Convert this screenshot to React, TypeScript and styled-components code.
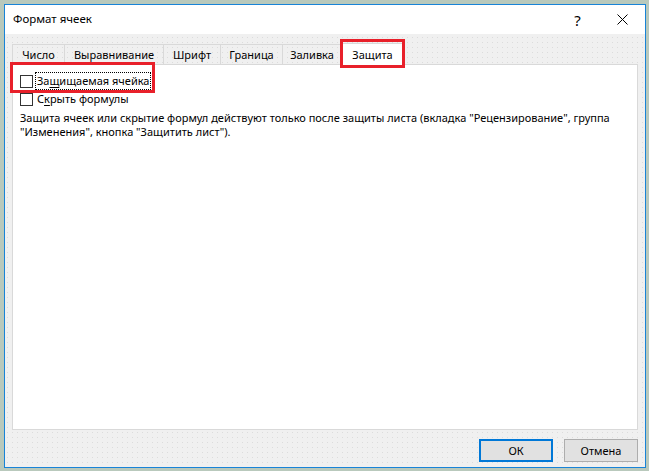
import styled, {createGlobalStyle} from 'styled-components';

const GlobalStyle = createGlobalStyle`
	html, body {
		margin: 0;
		padding: 0;
	}
	body {
		width: 649px;
		height: 471px;
		overflow: hidden;
		background: #b9c9bc;
		font-family: 'Noto Sans', sans-serif;
		font-size: 11px;
		color: #000;
	}
`;

const Window = styled.div`
	position: relative;
	margin: 4px 0 0 4px;
	width: 642px;
	height: 464px;
	box-sizing: border-box;
	border: 1px solid #1883d7;
	display: flex;
	flex-direction: column;
	background-color: #f0f0f0;
	background-image: radial-gradient(#dcdcdc 0.6px, transparent 0.8px);
	background-size: 5px 5px;
`;

const TitleBar = styled.div`
	height: 29px;
	flex: none;
	background: #fff;
	display: flex;
	align-items: center;
	padding-left: 8px;
`;

const Title = styled.span`
	flex: 1;
	font-size: 11.5px;
	margin-top: -2px;
`;

const TitleButton = styled.div`
	width: 45px;
	height: 29px;
	display: flex;
	align-items: center;
	justify-content: center;
	font-size: 15px;
`;

const Body = styled.div`
	flex: 1;
	display: flex;
	flex-direction: column;
	padding: 10px 7px 6px 7px;
`;

const TabStrip = styled.div`
	display: flex;
	height: 20px;
	align-items: flex-end;
`;

const Tab = styled.div<{$active?: boolean; $width: number}>`
	width: ${({$width}) => $width}px;
	height: ${({$active}) => ($active ? '22px' : '20px')};
	box-sizing: border-box;
	display: flex;
	align-items: center;
	justify-content: center;
	border: 1px solid #d9d9d9;
	border-bottom: none;
	margin-left: -1px;
	background: ${({$active}) => ($active ? '#fff' : 'transparent')};
	position: relative;
	z-index: ${({$active}) => ($active ? 2 : 1)};
	margin-bottom: ${({$active}) => ($active ? '-1px' : '0')};
	&:first-child {
		margin-left: 0;
	}
`;

const Panel = styled.div`
	height: 366px;
	box-sizing: border-box;
	background: #fff;
	border: 1px solid #d9d9d9;
	padding: 7px 7px 0 7px;
	display: flex;
	flex-direction: column;
`;

const CheckRow = styled.label`
	display: flex;
	align-items: center;
	height: 18px;
	gap: 3px;
`;

const Box = styled.span`
	width: 13px;
	height: 13px;
	box-sizing: border-box;
	border: 1px solid #333;
	background: #fff;
	flex: none;
`;

const Label = styled.span<{$focused?: boolean}>`
	padding: 0 1px;
	line-height: 16px;
	outline: ${({$focused}) => ($focused ? '1px dotted #000' : 'none')};
	outline-offset: 0;
	u {
		text-decoration: underline;
		text-underline-offset: 2px;
	}
`;

const Note = styled.p`
	margin: 3px 0 0 0;
	line-height: 14px;
	width: 600px;
`;

const ButtonRow = styled.div`
	display: flex;
	justify-content: flex-end;
	gap: 11px;
	margin-top: 9px;
`;

const Button = styled.button<{$primary?: boolean}>`
	width: 74px;
	height: 23px;
	box-sizing: border-box;
	font-family: inherit;
	font-size: 11px;
	color: #000;
	background: #e1e1e1;
	border: ${({$primary}) => ($primary ? '2px solid #0078d7' : '1px solid #adadad')};
	padding: 0;
`;

const Highlight = styled.div`
	position: absolute;
	border: 3px solid #e8202a;
	box-sizing: border-box;
	pointer-events: none;
	z-index: 5;
`;

function CloseIcon() {
	return (
		<svg width='11' height='11' viewBox='0 0 11 11'>
			<path d='M0.5 0.5L10.5 10.5M10.5 0.5L0.5 10.5' stroke='#000' strokeWidth='1' />
		</svg>
	);
}

const tabs = [
	{label: 'Число', width: 53},
	{label: 'Выравнивание', width: 100},
	{label: 'Шрифт', width: 58},
	{label: 'Граница', width: 63},
	{label: 'Заливка', width: 60},
	{label: 'Защита', width: 63},
];

function App() {
	return (
		<>
			<GlobalStyle />
			<Window>
				<TitleBar>
					<Title>Формат ячеек</Title>
					<TitleButton>?</TitleButton>
					<TitleButton>
						<CloseIcon />
					</TitleButton>
				</TitleBar>
				<Body>
					<TabStrip>
						{tabs.map((t) => (
							<Tab key={t.label} $width={t.width} $active={t.label === 'Защита'}>
								{t.label}
							</Tab>
						))}
					</TabStrip>
					<Panel>
						<CheckRow>
							<Box />
							<Label $focused>
								За<u>щ</u>ищаемая ячейка
							</Label>
						</CheckRow>
						<CheckRow>
							<Box />
							<Label>
								С<u>к</u>рыть формулы
							</Label>
						</CheckRow>
						<Note>
							Защита ячеек или скрытие формул действуют только после защиты листа (вкладка
							"Рецензирование", группа "Изменения", кнопка "Защитить лист").
						</Note>
					</Panel>
					<ButtonRow>
						<Button $primary>ОК</Button>
						<Button>Отмена</Button>
					</ButtonRow>
				</Body>
				<Highlight style={{left: 335, top: 34, width: 65, height: 29}} />
				<Highlight style={{left: 5, top: 57, width: 145, height: 31}} />
			</Window>
		</>
	);
}

export default App;
